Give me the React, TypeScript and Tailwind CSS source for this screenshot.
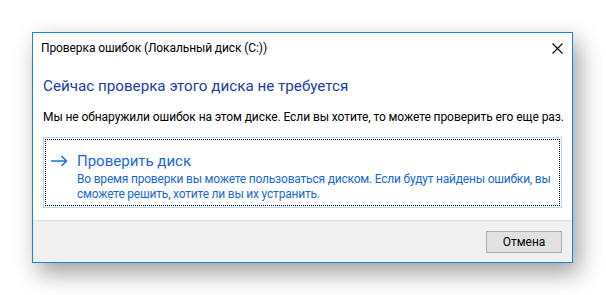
import React from 'react';

const ArrowIcon = () => (
  <svg width="18" height="12" viewBox="0 0 18 12" fill="none" className="shrink-0">
    <path d="M1 6H16.5M11.5 1L16.5 6L11.5 11" stroke="#1a78d6" strokeWidth="1.6" />
  </svg>
);

const CloseIcon = () => (
  <svg width="11" height="11" viewBox="0 0 11 11" fill="none">
    <path d="M0.5 0.5L10.5 10.5M10.5 0.5L0.5 10.5" stroke="#000" strokeWidth="1.1" />
  </svg>
);

const App: React.FC = () => {
  return (
    <div
      className="w-[606px] h-[295px] bg-white pt-[32px] pl-[32px]"
      style={{ fontFamily: 'Roboto, "Noto Sans", sans-serif' }}
    >
      <div className="w-[541px] h-[231px] border border-[#1883d7] bg-white flex flex-col shadow-[6px_10px_22px_rgba(0,0,0,0.38)]">
        {/* title bar */}
        <div className="h-[30px] flex items-center justify-between pl-[8px] pr-[9px] text-[12px] text-black">
          <span className="whitespace-nowrap tracking-[-0.1px]">Проверка ошибок (Локальный диск (C:))</span>
          <CloseIcon />
        </div>

        {/* content */}
        <div className="flex-1 pl-[10px] pr-[10px]">
          <div className="mt-[13px] text-[15.2px] leading-[21px] text-[#1a3da8] whitespace-nowrap">
            Сейчас проверка этого диска не требуется
          </div>
          <div className="mt-[12px] text-[12px] leading-[16px] text-black whitespace-nowrap tracking-[-0.08px]">
            Мы не обнаружили ошибок на этом диске. Если вы хотите, то можете проверить его еще раз.
          </div>

          <div className="mt-[12px] w-[519px] h-[71px] border border-[#b3d9f5] p-px">
            <div className="h-full border border-dotted border-black flex pl-[4px] pt-[11px]">
              <div className="pt-[4px] pr-[9px]">
                <ArrowIcon />
              </div>
              <div className="text-[#1769d0] whitespace-nowrap">
                <div className="text-[15px] leading-[20px]">Проверить диск</div>
                <div className="text-[12px] leading-[15px] mt-px tracking-[-0.2px]">
                  Во время проверки вы можете пользоваться диском. Если будут найдены ошибки, вы
                  <br />
                  сможете решить, хотите ли вы их устранить.
                </div>
              </div>
            </div>
          </div>
        </div>

        {/* footer */}
        <div className="h-[42px] border-t border-[#dfdfdf] bg-[#f0f0f0] flex items-center justify-end pr-[10px]">
          <button className="w-[76px] h-[22px] bg-[#e1e1e1] border border-[#adadad] text-[12px] text-black leading-none">
            Отмена
          </button>
        </div>
      </div>
    </div>
  );
};

export default App;
